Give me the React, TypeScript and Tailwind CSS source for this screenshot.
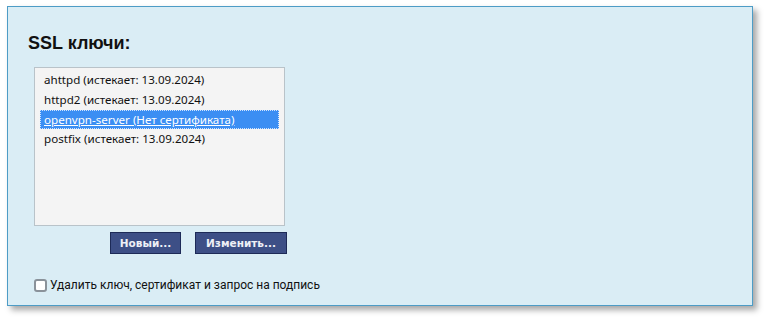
import React from "react";

export default function App() {
  const rows = [
    { t: "ahttpd (истекает: 13.09.2024)", sel: false },
    { t: "httpd2 (истекает: 13.09.2024)", sel: false },
    { t: "openvpn-server (Нет сертификата)", sel: true },
    { t: "postfix (истекает: 13.09.2024)", sel: false },
  ];
  return (
    <div className="w-[766px] h-[320px] bg-white pt-[6px] pl-[7px]">
      <div className="w-[746px] h-[300px] bg-[#daedf5] border border-[#4d9cc6] shadow-[4px_4px_6px_rgba(0,0,0,0.35)] pl-[20px] pt-[24px] flex flex-col">
        <h2 className="text-[18px] font-bold text-[#111] leading-[24px] font-['Liberation_Sans',Arial,sans-serif]">
          SSL ключи:
        </h2>
        <div className="mt-[12px] ml-[6px] w-[251px] h-[159px] bg-[#f4f4f4] border border-[#b9c3c9] pt-[2px] pl-[5px] pr-[5px] font-['Noto_Sans',sans-serif] text-[11.6px]">
          {rows.map((r) => (
            <div
              key={r.t}
              className={
                r.sel
                  ? "h-[19px] leading-[17px] pl-[3px] bg-[#3b8ef3] text-white underline border border-dotted border-[#cfe3ff] w-[239px]"
                  : "h-[20px] leading-[20px] pl-[4px] text-[#111]"
              }
            >
              {r.t}
            </div>
          ))}
        </div>
        <div className="flex gap-[14px] ml-[82px] mt-[6px]">
          <button className="w-[71px] h-[22px] bg-[#3d4f86] border border-[#1d2a57] text-[#eef0f6] text-[10.5px] font-bold font-['DejaVu_Sans',sans-serif] leading-[20px] text-center">
            Новый...
          </button>
          <button className="w-[92px] h-[22px] bg-[#3d4f86] border border-[#1d2a57] text-[#eef0f6] text-[10.5px] font-bold font-['DejaVu_Sans',sans-serif] leading-[20px] text-center">
            Изменить...
          </button>
        </div>
        <label className="flex items-center mt-[22px] ml-[6px] font-['Roboto',sans-serif] text-[12px] text-[#111]">
          <span className="w-[13px] h-[13px] border-2 border-[#8a929a] rounded-[3px] bg-white mr-[3px]" />
          Удалить ключ, сертификат и запрос на подпись
        </label>
      </div>
    </div>
  );
}
